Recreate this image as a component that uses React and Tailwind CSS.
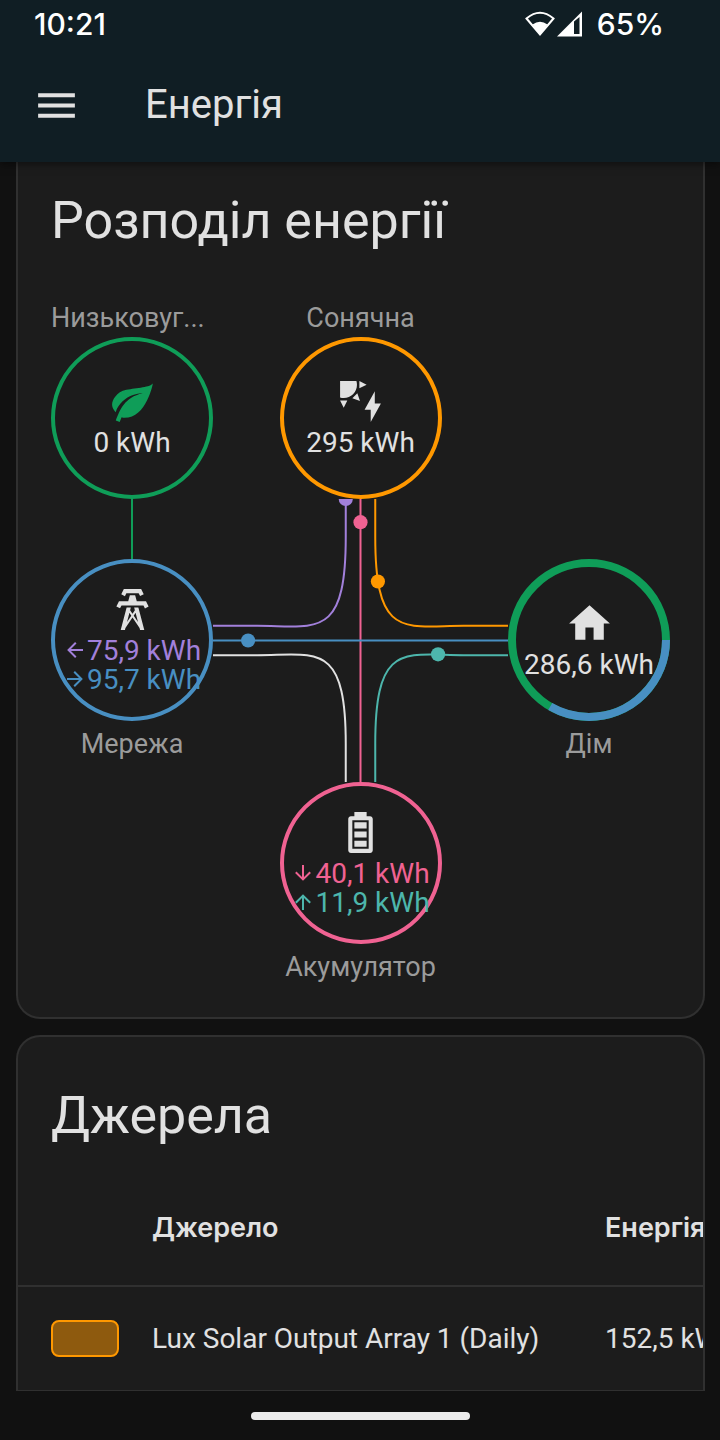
import React from "react";

const paths = {
  menu: "M3,6H21V8H3V6M3,11H21V13H3V11M3,16H21V18H3V16Z",
  leaf: "M17,8C8,10 5.9,16.17 3.82,21.34L5.71,22L6.66,19.7C7.14,19.87 7.64,20 8,20C19,20 22,3 22,3C21,5 14,5.25 9,6.25C4,7.25 2,11.5 2,13.5C2,15.5 3.75,17.25 3.75,17.25C7,8 17,8 17,8Z",
  solar:
    "M11.45,2V5.55L15,3.77L11.45,2M10.45,8L8,10.46L11.75,11.71L10.45,8M2,11.45L3.77,15L5.55,11.45H2M10,2H2V10C2.57,10.17 3.17,10.25 3.77,10.25C7.35,10.26 10.26,7.35 10.27,3.75C10.26,3.16 10.17,2.57 10,2M17,22V16H14L19,7V13H22L17,22Z",
  tower:
    "M8.28,5.45L6.5,4.55L7.76,2H16.23L17.5,4.55L15.72,5.44L15,4H9L8.28,5.45M18.62,8H14.09L13.3,5H10.7L9.91,8H5.38L4.1,10.55L5.89,11.44L6.62,10H17.38L18.1,11.45L19.89,10.56L18.62,8M17.77,22H15.7L15.46,21.1L12,15.9L8.53,21.1L8.3,22H6.23L9.12,11H11.19L10.83,12.35L12,14.1L13.16,12.35L12.81,11H14.88L17.77,22M11.4,15L10.5,13.65L9.32,18.13L11.4,15M14.68,18.12L13.5,13.64L12.6,15L14.68,18.12Z",
  home: "M10,20V14H14V20H19V12H22L12,3L2,12H5V20H10Z",
  battery:
    "M16 20H8V6H16M16.67 4H15V2H9V4H7.33C6.6 4 6 4.6 6 5.33V20.67C6 21.4 6.6 22 7.33 22H16.67C17.41 22 18 21.41 18 20.67V5.33C18 4.6 17.4 4 16.67 4M15 16H9V19H15V16M15 7H9V10H15V7M15 11.5H9V14.5H15V11.5Z",
  left: "M20,11V13H7.99L13.5,18.5L12.08,19.92L4.16,12L12.08,4.08L13.5,5.5L7.99,11H20Z",
  right: "M4,11V13H16.01L10.5,18.5L11.92,19.92L19.84,12L11.92,4.08L10.5,5.5L16.01,11H4Z",
  down: "M11,4H13V16.01L18.5,10.5L19.92,11.92L12,19.84L4.08,11.92L5.5,10.5L11,16.01V4Z",
  up: "M13,20H11V7.99L5.5,13.5L4.08,12.08L12,4.16L19.92,12.08L18.5,13.5L13,7.99V20Z",
};

function Icon({ name, className = "size-[49px]" }) {
  return (
    <svg viewBox="0 0 24 24" fill="currentColor" className={`shrink-0 ${className}`} aria-hidden="true">
      <path d={paths[name]} />
    </svg>
  );
}

function StatusBar() {
  return (
    <div className="flex h-12 items-center justify-between pr-14 pl-[34px] font-['Inter',sans-serif] text-[30px] leading-8 font-medium text-white">
      <span>10:21</span>
      <div className="flex items-center">
        <svg viewBox="0 0 30 26" className="h-[26px] w-[30px]" aria-hidden="true">
          <path d="M1.5 7.5Q15 -4 28.500 7.5L15 23.500Z" fill="none" stroke="white" strokeWidth="2" />
          <path d="M7.5 13.5Q15 8 22.500 13.5L15 24Z" fill="white" />
        </svg>
        <svg viewBox="0 0 26 26" className="ml-0.5 h-[26px] w-[26px]" aria-hidden="true">
          <path fillRule="evenodd" d="M0 25.500L25 0.500V25.500ZM17 10.500V23H22.500V6Z" fill="white" />
        </svg>
        <span className="ml-3.5">65%</span>
      </div>
    </div>
  );
}

function Node({ icon, iconColor = "text-[#e1e1e1]", border, children }) {
  return (
    <div
      className={`flex size-[162px] flex-col items-center justify-center rounded-full border-4 text-[28px] leading-[29px] whitespace-nowrap ${border}`}
    >
      <Icon name={icon} className={`-mt-0.5 mb-0.5 size-[49px] ${iconColor}`} />
      {children}
    </div>
  );
}

function Flow({ arrow, color, children }) {
  return (
    <span className={`flex items-center ${color}`}>
      <Icon name={arrow} className="size-6" />
      {children}
    </span>
  );
}

function Label({ className = "text-center", children }) {
  return <div className={`w-[162px] text-[27px] leading-[38px] text-[#9b9b9b] ${className}`}>{children}</div>;
}

const flows = [
  { d: "M45,0 v15 c0,35 -10,30 -30,30 h-20", color: "#a280db", dot: [45, 2] },
  { d: "M45,100 v-15 c0,-35 -10,-30 -30,-30 h-20", color: "#e1e1e1" },
  { d: "M55,0 v15 c0,35 10,30 30,30 h25", color: "#ff9800", dot: [55.9, 30] },
  { d: "M55,100 v-15 c0,-35 10,-30 30,-30 h20", color: "#4db6ac", dot: [76.3, 54.7] },
  { d: "M50,0 V100", color: "#f06292", dot: [50, 9.9] },
  { d: "M0,50 H100", color: "#488fc2", dot: [11.9, 50] },
];

function FlowLines() {
  return (
    <svg
      viewBox="0 0 100 100"
      preserveAspectRatio="xMidYMid slice"
      className="absolute top-[200px] right-[162px] left-[162px] h-[283px] w-[calc(100%-324px)]"
      aria-hidden="true"
    >
      {flows.map((flow) => (
        <path
          key={flow.d}
          d={flow.d}
          fill="none"
          stroke={flow.color}
          strokeWidth="2"
          vectorEffect="non-scaling-stroke"
        />
      ))}
      {flows
        .filter((flow) => flow.dot)
        .map((flow) => (
          <circle key={flow.d} cx={flow.dot[0]} cy={flow.dot[1]} r="2.4" fill={flow.color} />
        ))}
    </svg>
  );
}

function DistributionCard() {
  return (
    <section className="rounded-b-3xl border-2 border-t-0 border-[#303030] bg-[#1c1c1c] px-[33px] pt-5 pb-[31px]">
      <h2 className="text-[52px] leading-[78px] whitespace-nowrap">Розподіл енергії</h2>
      <div className="relative mt-[39px]">
        <FlowLines />

        <div className="grid grid-cols-[162px_162px_162px] justify-between">
          <div>
            <Label className="text-left">Низьковуг...</Label>
            <Node icon="leaf" iconColor="text-[#0f9d58]" border="border-[#0f9d58]">
              <span>0 kWh</span>
            </Node>
            <div className="mx-auto h-[60px] w-0.5 bg-[#0f9d58]" />
          </div>
          <div>
            <Label>Сонячна</Label>
            <Node icon="solar" border="border-[#ff9800]">
              <span>295 kWh</span>
            </Node>
          </div>
        </div>

        <div className="flex justify-between">
          <div>
            <Node icon="tower" border="border-[#488fc2]">
              <Flow arrow="left" color="text-[#a280db]">75,9 kWh</Flow>
              <Flow arrow="right" color="text-[#488fc2]">95,7 kWh</Flow>
            </Node>
            <Label className="mt-1 text-center">Мережа</Label>
          </div>
          <div>
            <div className="relative">
              <svg viewBox="0 0 162 162" className="absolute inset-0" fill="none" strokeWidth="8" aria-hidden="true">
                <circle cx="81" cy="81" r="77" stroke="#0f9d58" />
                <circle cx="81" cy="81" r="77" stroke="#488fc2" pathLength="100" strokeDasharray="33.4 66.6" />
              </svg>
              <Node icon="home" border="border-transparent">
                <span className="relative">286,6 kWh</span>
              </Node>
            </div>
            <Label className="mt-1 text-center">Дім</Label>
          </div>
        </div>

        <div className="mt-[19px] flex justify-center">
          <div>
            <Node icon="battery" border="border-[#f06292]">
              <Flow arrow="down" color="text-[#f06292]">40,1 kWh</Flow>
              <Flow arrow="up" color="text-[#4db6ac]">11,9 kWh</Flow>
            </Node>
            <Label className="mt-1 text-center">Акумулятор</Label>
          </div>
        </div>
      </div>
    </section>
  );
}

function SourcesCard() {
  return (
    <section className="mt-4 overflow-hidden rounded-t-3xl border-2 border-b-0 border-[#303030] bg-[#1c1c1c] pt-10">
      <h2 className="px-[33px] text-[52px] leading-[78px]">Джерела</h2>
      <table className="mt-4 w-full table-fixed border-separate border-spacing-0 text-left text-[28px] leading-8 whitespace-nowrap">
        <thead className="font-['Inter',sans-serif] text-[27px]">
          <tr className="h-[116px]">
            <th className="w-[134px] border-b-2 border-[#303030]" aria-label="Колір" />
            <th className="border-b-2 border-[#303030] font-semibold">Джерело</th>
            <th className="w-[98px] border-b-2 border-[#303030] font-semibold">Енергія</th>
          </tr>
        </thead>
        <tbody>
          <tr className="h-[104px]">
            <td className="border-b border-[#303030] pl-[33px]">
              <div className="h-[37px] w-[68px] rounded-lg border-2 border-[#ff9800] bg-[#8e5a0e]" />
            </td>
            <td className="border-b border-[#303030]">Lux Solar Output Array 1 (Daily)</td>
            <td className="border-b border-[#303030]">152,5 kWh</td>
          </tr>
        </tbody>
      </table>
    </section>
  );
}

export default function App() {
  return (
    <div className="min-h-screen overflow-hidden bg-[#111111] font-['Roboto','Inter',sans-serif] text-[#e1e1e1]">
      <header className="relative bg-[#101e24] shadow-[0_2px_8px_rgba(0,0,0,0.5)]">
        <StatusBar />
        <div className="flex h-[114px] items-center pl-8">
          <button type="button" aria-label="Меню">
            <Icon name="menu" />
          </button>
          <h1 className="ml-16 text-[40px] leading-[48px]">Енергія</h1>
        </div>
      </header>
      <main className="pr-[15px] pl-4">
        <DistributionCard />
        <SourcesCard />
      </main>
      <footer className="flex h-[49px] items-center justify-center">
        <div className="h-2 w-[219px] rounded-full bg-[#ececec]" />
      </footer>
    </div>
  );
}
